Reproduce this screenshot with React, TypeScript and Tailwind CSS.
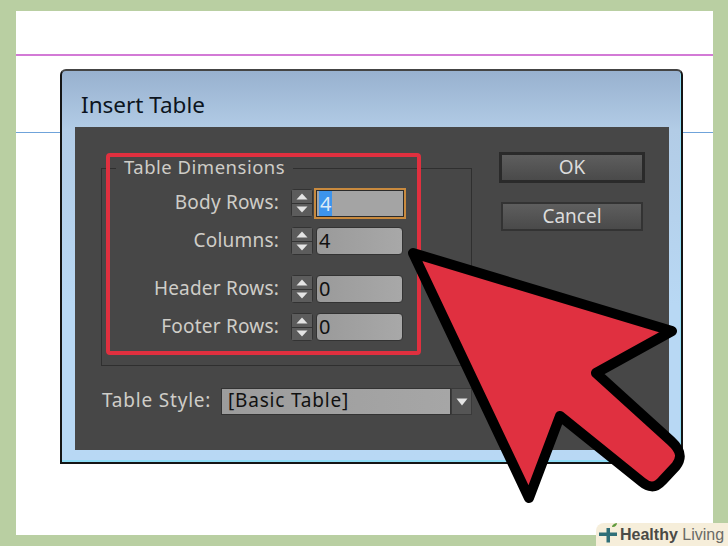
const rows = [
  { label: "Body Rows:", value: "4", focused: true, gap: "mt-0" },
  { label: "Columns:", value: "4", focused: false, gap: "mt-[10px]" },
  { label: "Header Rows:", value: "0", focused: false, gap: "mt-[20px]" },
  { label: "Footer Rows:", value: "0", focused: false, gap: "mt-[10px]" },
]

function Spinner() {
  return (
    <div className="flex h-[28px] w-[22px] flex-col gap-px rounded-sm bg-[#333] p-px">
      <div className="flex flex-1 items-center justify-center bg-[#5c5c5c]">
        <svg width="12" height="7" viewBox="0 0 12 7">
          <path d="M6 0.5 L11.5 6.5 L0.5 6.5 Z" fill="#e4e4e4" />
        </svg>
      </div>
      <div className="flex flex-1 items-center justify-center bg-[#5c5c5c]">
        <svg width="12" height="7" viewBox="0 0 12 7">
          <path d="M0.5 0.5 L11.5 0.5 L6 6.5 Z" fill="#e4e4e4" />
        </svg>
      </div>
    </div>
  )
}

function Row({ label, value, focused, gap }: (typeof rows)[number]) {
  return (
    <div className={`flex h-[28px] items-center ${gap}`}>
      <div className="w-[177px] pb-[2px] text-right text-[19px] leading-none tracking-[0.2px] text-[#cfcdc8]">
        {label}
      </div>
      <div className="ml-[12px]">
        <Spinner />
      </div>
      <div
        className={
          focused
            ? "ml-px flex h-[31px] w-[92px] items-center border-2 border-[#c98a3e] bg-[#a4a4a4] pl-[3px] outline outline-1 -outline-offset-3 outline-[#2b2b2b]"
            : "ml-[3px] flex h-[28px] w-[87px] items-center rounded-sm border border-[#333] bg-gradient-to-r from-[#9a9a9a] to-[#a8a8a8] pl-[2px]"
        }
      >
        <span
          className={
            focused
              ? "bg-[#3d94ec] px-[1px] text-[20px] leading-[25px] text-[#dbe9f7]"
              : "pb-[1px] text-[20px] leading-none text-[#111]"
          }
        >
          {value}
        </span>
      </div>
    </div>
  )
}

function DialogButton({ text, className }: { text: string; className: string }) {
  return (
    <div
      className={`flex items-center justify-center bg-gradient-to-b from-[#5e5e5e] to-[#4a4a4a] pb-[1px] text-[19px] leading-none text-[#dcdcdc] ${className}`}
    >
      {text}
    </div>
  )
}

function Pointer() {
  return (
    <svg
      className="pointer-events-none absolute left-0 top-0"
      width="728"
      height="546"
      viewBox="0 0 728 546"
    >
      <path
        d="M413 253 L672 331 L596 373 L671 441 C682 451 682 458 676 466 L662 481 C655 489 648 487 642 482 L560 416 L529 498 Z"
        fill="#e03040"
        stroke="#000"
        strokeWidth="10"
        strokeLinejoin="round"
      />
    </svg>
  )
}

function Logo() {
  return (
    <div className="absolute bottom-0 right-0 flex h-[23px] w-[132px] items-center rounded-tl-lg bg-[#f6eeda] pl-[3px]">
      <svg width="21" height="23" viewBox="0 0 21 23" className="shrink-0">
        <path d="M7.5 5 H11 V9.5 H18 V13 H11 V19.5 H7.5 V13 H0 V9.5 H7.5 Z" fill="#2f6f78" />
        <path d="M13 4 C13 2 15 0.5 18 0 C18 2 16 4.5 13 4 Z" fill="#5f9a3c" />
      </svg>
      <span className="whitespace-nowrap font-['Liberation_Sans',Arial,sans-serif] text-[16px] leading-none text-[#6a6a66]">
        <b className="text-[#4a4a46]">Healthy</b> Living
      </span>
    </div>
  )
}

export default function App() {
  return (
    <div className="relative h-[546px] w-[728px] overflow-hidden bg-[#b9cfa2] pb-[11px] pl-[16px] pr-[15px] pt-[11px] font-['Noto_Sans',sans-serif]">
      <div className="relative h-[524px] bg-white pl-[44px] pr-[30px] pt-[43px]">
        <div className="absolute left-0 right-0 top-[43px] h-[2px] bg-[#d37ad6]" />
        <div className="absolute left-0 right-0 top-[121px] h-[1px] bg-[#6fa3da]" />

        <div className="relative mt-[15px] h-[395px] w-[623px] rounded-t-md border-2 border-x-[#151515] border-b-[#151515] border-t-[#444] bg-gradient-to-b from-[#98b1cf] via-[#b2cce6] via-[15%] to-[#b8d8f4] to-[60%] pl-[13px] pt-[56px] shadow-[inset_-1px_-2px_0_#8fdcf5]">
          <div className="absolute left-[19px] top-[19px] text-[22.5px] leading-[30px] text-[#0c1420]">
            Insert Table
          </div>

          <div className="flex h-[323px] w-[594px] bg-[#474747] pl-[26px] pt-[41px]">
            <div className="w-[371px] shrink-0">
              <div className="relative h-[198px] border border-[#2f2f2f] pt-[20px]">
                <div className="absolute left-[14px] top-[-13px] bg-[#474747] px-[8px] text-[18.5px] leading-[22px] tracking-[0.5px] text-[#cfcdc8]">
                  Table Dimensions
                </div>
                {rows.map((row) => (
                  <Row key={row.label} {...row} />
                ))}
              </div>
              <div className="mt-[22px] flex h-[27px] items-center">
                <div className="w-[120px] pb-[3px] pl-px text-[19px] leading-none tracking-[0.8px] text-[#cfcdc8]">
                  Table Style:
                </div>
                <div className="flex h-[27px] w-[230px] items-center border border-[#333] bg-gradient-to-r from-[#9c9c9c] to-[#a6a6a6] pb-[2px] pl-[6px] text-[19px] leading-none tracking-[0.8px] text-[#111]">
                  [Basic Table]
                </div>
                <div className="flex h-[27px] w-[21px] items-center justify-center bg-[#555] shadow-[inset_0_0_0_1px_#3a3a3a]">
                  <svg width="12" height="8" viewBox="0 0 12 8">
                    <path d="M0.5 0.5 L11.5 0.5 L6 7.5 Z" fill="#e4e4e4" />
                  </svg>
                </div>
              </div>
            </div>

            <div className="ml-[27px] mt-[-16px]">
              <DialogButton text="OK" className="h-[31px] w-[146px] border-[3px] border-[#2a2a2a]" />
              <DialogButton text="Cancel" className="ml-[2px] mt-[19px] h-[29px] w-[142px] border-2 border-[#333]" />
            </div>
          </div>

          <div className="absolute left-[44px] top-[82px] h-[202px] w-[315px] rounded-sm border-[4px] border-[#e0303f]" />
        </div>
      </div>
      <Pointer />
      <Logo />
    </div>
  )
}
